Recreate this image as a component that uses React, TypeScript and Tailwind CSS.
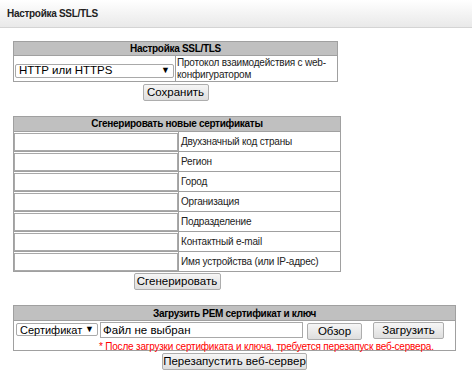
import React from 'react';

const labels = [
  'Двухзначный код страны',
  'Регион',
  'Город',
  'Организация',
  'Подразделение',
  'Контактный e-mail',
  'Имя устройства (или IP-адрес)',
];

function Button({ children, className = '' }: { children: React.ReactNode; className?: string }) {
  return (
    <button
      className={`h-[17px] border border-[#adadad] rounded-[2px] bg-gradient-to-b from-[#f6f6f6] to-[#dedede] text-[11.5px] leading-[15px] text-black px-0 whitespace-nowrap text-center ${className}`}
    >
      {children}
    </button>
  );
}

function Arrow() {
  return <span className="text-[9px] leading-none text-black">▼</span>;
}

export default function App() {
  return (
    <div className="w-[472px] h-[376px] bg-white font-['Liberation_Sans',Arial,sans-serif] text-black">
      <div className="h-[28px] border-b border-[#d4d4d4] bg-gradient-to-b from-white to-[#e9e9e9] flex items-center px-[7px]">
        <span className="text-[10px] tracking-[-0.3px] font-bold text-[#222]">Настройка SSL/TLS</span>
      </div>

      <div className="pl-[13px] pt-[13px]">
        {/* SSL/TLS settings */}
        <div className="w-[325px] flex flex-col items-center">
          <div className="w-full border border-[#a0a0a0]">
            <div className="h-[14px] bg-[#c0c0c0] border-b border-[#a0a0a0] text-[10px] tracking-[-0.3px] font-bold leading-[14px] text-center">
              Настройка SSL/TLS
            </div>
            <div className="flex h-[25px]">
              <div className="w-[162px] border-r border-[#a0a0a0] flex items-center pl-[1px]">
                <div className="w-[159px] h-[14px] border border-[#a9a9a9] rounded-[2px] flex items-center justify-between px-[3px] mt-[4px]">
                  <span className="text-[11.5px] leading-[13px]">HTTP или HTTPS</span>
                  <Arrow />
                </div>
              </div>
              <div className="flex-1 text-[10px] tracking-[-0.2px] leading-[12px] pl-[1px] pt-[1px] text-[#222] whitespace-nowrap">
                Протокол взаимодействия с web-
                <br />
                конфигуратором
              </div>
            </div>
          </div>
          <Button className="mt-[2px] w-[66px]">Сохранить</Button>
        </div>

        {/* Generate certificates */}
        <div className="w-[328px] flex flex-col items-center mt-[15px]">
          <div className="w-full border border-[#a0a0a0]">
            <div className="h-[14px] bg-[#c0c0c0] text-[10px] tracking-[-0.3px] font-bold leading-[14px] text-center">
              Сгенерировать новые сертификаты
            </div>
            {labels.map((label) => (
              <div key={label} className="flex h-[20px] border-t border-[#a0a0a0]">
                <div className="w-[165px] border-r border-[#a0a0a0] flex items-center">
                  <div className="w-[164px] h-[18px] border border-[#a9a9a9] bg-white" />
                </div>
                <div className="flex-1 flex items-center text-[10px] tracking-[-0.2px] pl-[2px] text-[#222]">{label}</div>
              </div>
            ))}
          </div>
          <Button className="mt-[1px] w-[87px]">Сгенерировать</Button>
        </div>

        {/* Upload PEM */}
        <div className="w-[443px] flex flex-col items-center mt-[15px]">
          <div className="w-full border border-[#a0a0a0]">
            <div className="h-[15px] bg-[#c0c0c0] border-b border-[#a0a0a0] text-[10px] tracking-[-0.3px] font-bold leading-[15px] text-center">
              Загрузить PEM сертификат и ключ
            </div>
            <div className="h-[29px] pl-[2px] pt-[1px]">
              <div className="flex items-start">
                <div className="w-[82px] h-[13px] border border-[#a9a9a9] rounded-[2px] flex items-center justify-between px-[3px] mt-[1px]">
                  <span className="text-[11px] leading-[12px]">Сертификат</span>
                  <Arrow />
                </div>
                <div className="w-[203px] h-[16px] border border-[#a9a9a9] ml-[2px] text-[11.5px] leading-[14px] pl-[2px]">
                  Файл не выбран
                </div>
                <Button className="ml-[4px] mt-[1px] w-[55px]">Обзор</Button>
                <Button className="ml-[11px] w-[71px] h-[15px] leading-[13px]">Загрузить</Button>
              </div>
              <div className="text-[10px] tracking-[-0.2px] leading-[12px] text-[#ff0000] pl-[83px] mt-[1px] whitespace-nowrap">
                * После загрузки сертификата и ключа, требуется перезапуск веб-сервера.
              </div>
            </div>
          </div>
          <Button className="mt-[2px] w-[145px]">Перезапустить веб-сервер</Button>
        </div>
      </div>
    </div>
  );
}
